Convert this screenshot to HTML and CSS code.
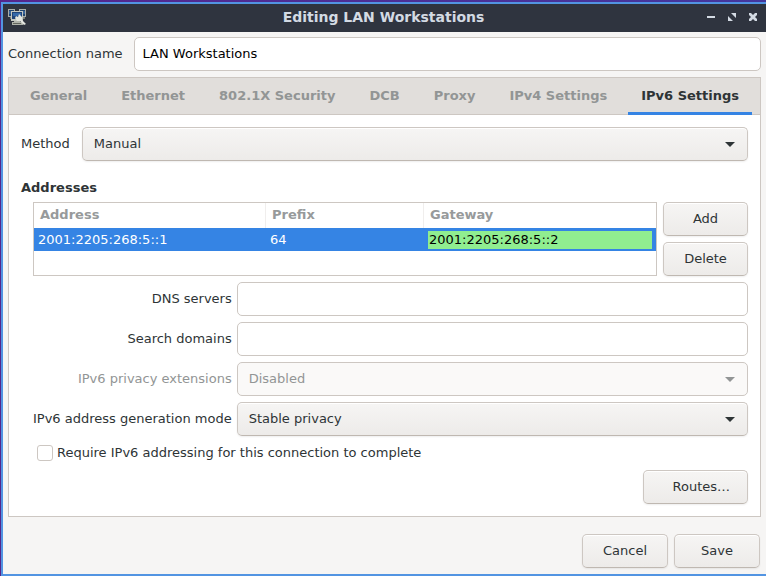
FILE: index.html
```html
<!DOCTYPE html>
<html lang="en">
<head>
<meta charset="utf-8">
<title>Editing LAN Workstations</title>
<link rel="stylesheet" href="styles.css">
</head>
<body>
<div class="window">
  <header class="titlebar">
    <svg class="app-icon" viewBox="0 0 18 18" aria-hidden="true">
      <path d="M0 1h7v8H0zM11 1h7v8h-7z" fill="#a9ada8"/>
      <path d="M1 2h5v6H1zM12 2h5v6h-5z" fill="#23466f"/>
      <path d="M1 3h4v3H1zM13 3h4v3h-4z" fill="#3a6499"/>
      <path d="M2 9h3v2H2zM13 9h4v2h-4z" fill="#7b7f79"/>
      <path d="M3 3h12v10H3z" fill="#c4c7c0"/>
      <path d="M4 4h10v7H4z" fill="#1f4478"/>
      <path d="M5 5h8v3H5z" fill="#3568a8"/>
      <path d="M6 13h6v1h3v3H4v-3h2z" fill="#b0b3ab"/>
      <path d="M5 15h8v1H5z" fill="#63665f"/>
      <path d="M8 8l2 1 1-3 3 3v3l4 4-2 1-4-4H9L7 10z" fill="#e4e6e0"/>
    </svg>
    <h1 class="title">Editing LAN Workstations</h1>
    <div class="window-controls">
      <button class="control" type="button" aria-label="Minimize"><svg viewBox="0 0 8 8"><path d="M0 3h8v2H0z"/></svg></button>
      <button class="control" type="button" aria-label="Maximize"><svg viewBox="0 0 8 8"><path d="M3 0h5v5zM0 3l5 5H0z"/></svg></button>
      <button class="control" type="button" aria-label="Close"><svg viewBox="0 0 8 8"><path d="M0 0h2l2 2 2-2h2v2L6 4l2 2v2H6L4 6 2 8H0V6l2-2-2-2z"/></svg></button>
    </div>
  </header>
  <form class="content">
    <div class="name-row">
      <label for="name">Connection name</label>
      <input class="entry" id="name" type="text" value="LAN Workstations">
    </div>
    <section class="notebook">
      <div class="tabs" role="tablist">
        <button class="tab" type="button" role="tab">General</button>
        <button class="tab" type="button" role="tab">Ethernet</button>
        <button class="tab" type="button" role="tab">802.1X Security</button>
        <button class="tab" type="button" role="tab">DCB</button>
        <button class="tab" type="button" role="tab">Proxy</button>
        <button class="tab" type="button" role="tab">IPv4 Settings</button>
        <button class="tab active" type="button" role="tab" aria-selected="true">IPv6 Settings</button>
      </div>
      <div class="page" role="tabpanel">
        <div class="method-row">
          <label for="method">Method</label>
          <div class="combo"><select id="method"><option>Manual</option></select></div>
        </div>
        <h2 class="heading">Addresses</h2>
        <div class="group">
          <div class="addresses">
            <div class="table-frame">
              <table>
                <colgroup><col class="col-address"><col class="col-prefix"><col></colgroup>
                <thead><tr><th>Address</th><th>Prefix</th><th>Gateway</th></tr></thead>
                <tbody><tr><td>2001:2205:268:5::1</td><td>64</td><td><input class="cell-entry" type="text" aria-label="Gateway" value="2001:2205:268:5::2"></td></tr></tbody>
              </table>
            </div>
            <div class="side-buttons">
              <button class="button" type="button">Add</button>
              <button class="button" type="button">Delete</button>
            </div>
          </div>
          <div class="fields">
            <label for="dns">DNS servers</label>
            <input class="entry" id="dns" type="text">
            <label for="search">Search domains</label>
            <input class="entry" id="search" type="text">
            <label class="disabled" for="privacy">IPv6 privacy extensions</label>
            <div class="combo disabled"><select id="privacy" disabled><option>Disabled</option></select></div>
            <label for="mode">IPv6 address generation mode</label>
            <div class="combo"><select id="mode"><option>Stable privacy</option></select></div>
          </div>
          <div class="check-row">
            <input class="check" id="require" type="checkbox">
            <label for="require">Require IPv6 addressing for this connection to complete</label>
          </div>
          <button class="button routes" type="button">Routes…</button>
        </div>
      </div>
    </section>
    <footer class="actions">
      <button class="button" type="button">Cancel</button>
      <button class="button" type="submit">Save</button>
    </footer>
  </form>
</div>
</body>
</html>
```
FILE: styles.css
```css
* {
  box-sizing: border-box;
}

body {
  margin: 0;
  padding: 2px 0 0 1px;
  min-height: 100vh;
  display: flex;
  background: linear-gradient(90deg, #55268b, #44379c);
  color: #2e3436;
  font: 13px/18px "DejaVu Sans", sans-serif;
}

input, select, button {
  font: inherit;
  color: inherit;
  margin: 0;
}

.window {
  flex: 1;
  display: flex;
  flex-direction: column;
  border: 2px solid #5294e2;
  border-right: 0;
  background: #f6f5f4;
}

.titlebar {
  display: grid;
  grid-template-columns: 1fr auto 1fr;
  align-items: center;
  height: 28px;
  padding: 0 7px 2px 5px;
  background: #2f343f;
  color: #d3dae3;
}

.app-icon {
  width: 18px;
  height: 18px;
}

.title {
  margin: 0;
  font-size: 14px;
  font-weight: bold;
}

.window-controls {
  display: flex;
  justify-content: flex-end;
  gap: 9px;
}

.control {
  display: flex;
  padding: 2px;
  border: 0;
  background: none;
}

.control svg {
  width: 8px;
  height: 8px;
  fill: #d3dae3;
}

.content {
  flex: 1;
  display: flex;
  flex-direction: column;
  padding: 5px 5px 6px;
}

.name-row {
  display: flex;
  align-items: center;
  gap: 11px;
  margin-bottom: 6px;
}

.entry {
  flex: 1;
  min-width: 0;
  height: 34px;
  padding: 0 8px 2px;
  border: 1px solid #cdc7c2;
  border-radius: 5px;
  background: #fff;
  color: #000;
}

.notebook {
  border: 1px solid #cdc7c2;
  background: #fff;
}

.tabs {
  display: flex;
  gap: 8px;
  padding: 0 8px;
  background: #e1dedb;
  box-shadow: inset 0 -1px #cdc7c2;
}

.tab {
  flex: 1 1 auto;
  height: 37px;
  padding: 2px 11px 0;
  border: 0;
  border-bottom: 3px solid transparent;
  background: none;
  color: #929595;
  font-weight: bold;
  white-space: nowrap;
}

.tab.active {
  border-bottom-color: #3584e4;
  color: #2e3436;
}

.page {
  padding: 12px;
}

.method-row {
  display: flex;
  align-items: center;
  gap: 12px;
}

.combo {
  position: relative;
  flex: 1;
}

.combo select {
  display: block;
  appearance: none;
  width: 100%;
  height: 34px;
  padding: 0 32px 0 11px;
  border: 1px solid #cdc7c2;
  border-bottom-color: #bfb8b1;
  border-radius: 5px;
  background: linear-gradient(#f6f5f4, #edebe9);
  box-shadow: inset 0 1px #fff, 0 1px 2px rgba(0, 0, 0, 0.07);
}

.combo::after {
  content: "";
  position: absolute;
  top: 15px;
  right: 13px;
  border: 5px solid transparent;
  border-top-color: #2e3436;
  border-bottom: 0;
}

.combo.disabled select {
  border-color: #cdc7c2;
  background: #faf9f8;
  box-shadow: none;
  opacity: 1;
}

.combo.disabled::after {
  border-top-color: #929595;
}

.disabled, .combo.disabled select {
  color: #929595;
}

.heading {
  margin: 18px 0 5px;
  font-size: 13px;
  font-weight: bold;
}

.group {
  display: flex;
  flex-direction: column;
  gap: 6px;
  padding-left: 12px;
}

.addresses {
  display: flex;
  gap: 6px;
}

.table-frame {
  flex: 1;
  border: 1px solid #cdc7c2;
}

table {
  width: 100%;
  border-collapse: separate;
  border-spacing: 0;
  table-layout: fixed;
}

.col-address {
  width: 232px;
}

.col-prefix {
  width: 158px;
}

th {
  height: 25px;
  padding: 0 6px 2px;
  border-right: 1px solid #f0eeed;
  color: #979a9b;
  text-align: left;
}

th:last-child {
  border-right: 0;
}

td {
  height: 23px;
  padding: 0 4px;
  background: #3584e4;
  color: #fff;
}

.cell-entry {
  display: block;
  width: 100%;
  height: 18px;
  padding: 1px 1px 0;
  border: 0;
  background: #90ee90;
  color: #000;
}

.side-buttons {
  display: flex;
  flex-direction: column;
  gap: 6px;
  width: 85px;
}

.button {
  height: 34px;
  padding: 0 12px;
  border: 1px solid #cdc7c2;
  border-bottom-color: #bfb8b1;
  border-radius: 5px;
  background: linear-gradient(#f6f5f4, #edebe9);
  box-shadow: inset 0 1px #fff, 0 1px 2px rgba(0, 0, 0, 0.07);
}

.fields {
  display: grid;
  grid-template-columns: auto 1fr;
  align-items: center;
  gap: 6px 5px;
}

.fields label {
  text-align: right;
}

.check-row {
  display: flex;
  align-items: center;
  gap: 4px;
  height: 22px;
  padding-left: 4px;
}

.check {
  appearance: none;
  width: 16px;
  height: 16px;
  border: 1px solid #cdc7c2;
  border-radius: 3px;
  background: #fff;
}

.routes {
  align-self: flex-end;
  padding-left: 28px;
  padding-right: 17px;
}

.actions {
  display: flex;
  justify-content: flex-end;
  gap: 6px;
  margin-top: auto;
  padding: 17px 1px 0;
}

.actions .button {
  min-width: 86px;
}
```
